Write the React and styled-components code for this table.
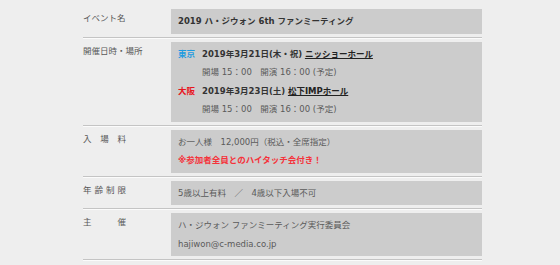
import React from 'react'
import styled, { createGlobalStyle } from 'styled-components'

const GlobalStyle = createGlobalStyle`
    html, body {
        margin: 0;
        background: #eeeeee;
    }
    body {
        font-family: "DejaVu Sans", "Noto Sans CJK JP", sans-serif;
        font-size: 8.5px;
        color: #555;
    }
`

const Table = styled.div`
    width: 399px;
    margin-left: 83px;
    padding-top: 6px;
`

const Row = styled.div`
    display: grid;
    grid-template-columns: 88px 311px;
    padding: 3px 0 3px;
    border-bottom: 1px solid #c4c4c4;
    box-shadow: 0 1px 0 #fbfbfb;
    margin-bottom: 1px;
`

const Label = styled.div`
    line-height: 18.5px;
    color: #585858;
    ${p => p.$spread && `
        display: flex;
        justify-content: space-between;
        width: 43px;
    `}
`

const Value = styled.div`
    background: #cccccc;
    padding: 3px 7px;
    line-height: 18.5px;
    color: #5a5a5a;
`

const Title = styled.div`
    font-weight: bold;
    color: #333;
`

const Venue = styled.div`
    display: grid;
    grid-template-columns: 24px 1fr;
`

const City = styled.span`
    font-weight: bold;
    color: ${p => p.$color};
`

const Date = styled.span`
    font-weight: bold;
    color: #333;
`

const Hall = styled.span`
    font-weight: bold;
    color: #222;
    text-decoration: underline;
`

const Time = styled.div`
    grid-column: 2;
`

const Note = styled.div`
    color: #f5323a;
    font-weight: bold;
`

const SpreadLabel = ({ text }) => (
    <Label $spread>
        {text.split('').map((c, i) => <span key={i}>{c}</span>)}
    </Label>
)

export default function App() {
    return (
        <>
            <GlobalStyle />
            <Table>
                <Row>
                    <Label>イベント名</Label>
                    <Value>
                        <Title>2019 ハ・ジウォン 6th ファンミーティング</Title>
                    </Value>
                </Row>
                <Row>
                    <Label>開催日時・場所</Label>
                    <Value>
                        <Venue>
                            <City $color="#1c9be0">東京</City>
                            <div><Date>2019年3月21日(木・祝)</Date> <Hall>ニッショーホール</Hall></div>
                            <Time>開場 15：00　開演 16：00 (予定)</Time>
                            <City $color="#e8141e">大阪</City>
                            <div><Date>2019年3月23日(土)</Date> <Hall>松下IMPホール</Hall></div>
                            <Time>開場 15：00　開演 16：00 (予定)</Time>
                        </Venue>
                    </Value>
                </Row>
                <Row>
                    <SpreadLabel text="入場料" />
                    <Value>
                        <div>お一人様　12,000円（税込・全席指定）</div>
                        <Note>※参加者全員とのハイタッチ会付き！</Note>
                    </Value>
                </Row>
                <Row>
                    <SpreadLabel text="年齢制限" />
                    <Value>5歳以上有料　／　4歳以下入場不可</Value>
                </Row>
                <Row>
                    <SpreadLabel text="主催" />
                    <Value>
                        <div>ハ・ジウォン ファンミーティング実行委員会</div>
                        <div>hajiwon@c-media.co.jp</div>
                    </Value>
                </Row>
            </Table>
        </>
    )
}
